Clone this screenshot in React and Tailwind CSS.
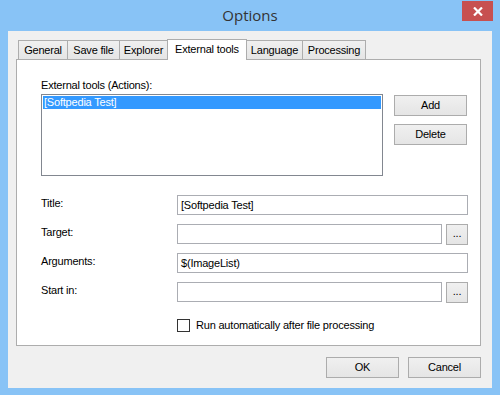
import React from "react";

const tabs = [
  { name: "General", w: "w-[50px]" },
  { name: "Save file", w: "w-[53px]" },
  { name: "Explorer", w: "w-[49px]" },
  { name: "External tools", w: "w-[80px]", active: true },
  { name: "Language", w: "w-[57px]" },
  { name: "Processing", w: "w-[64px]" },
];

const WinButton = ({ children, className = "" }) => (
  <button
    className={
      "h-[21px] border border-[#acacac] bg-gradient-to-b from-[#f0f0f0] to-[#e5e5e5] text-[11px] text-black leading-none " +
      className
    }
  >
    {children}
  </button>
);

const Field = ({ value, className = "" }) => (
  <div
    className={
      "h-[20px] border border-[#abadb3] bg-white pl-[3px] flex items-center text-[11px] text-black " +
      className
    }
  >
    {value}
  </div>
);

const Row = ({ label, children }) => (
  <div className="flex items-start h-[20px]">
    <div className="w-[136px] text-[11px] text-black">{label}</div>
    <div className="flex-1 flex gap-[4px]">{children}</div>
  </div>
);

export default function App() {
  return (
    <div className="w-[500px] h-[395px] bg-[#88c3f6] flex flex-col font-['Liberation_Sans',Arial,sans-serif] tracking-[-0.2px] overflow-hidden">
      {/* title bar */}
      <div className="relative h-[31px] flex items-center justify-center">
        <span className="font-['Open_Sans',sans-serif] text-[15px] text-[#333] tracking-normal">
          Options
        </span>
        <button className="absolute right-[7px] top-[1px] w-[31px] h-[20px] bg-[#c75050] flex items-center justify-center">
          <svg width="10" height="9" viewBox="0 0 10 9">
            <path d="M1 0.5 L9 8.5 M9 0.5 L1 8.5" stroke="white" strokeWidth="2.2" />
          </svg>
        </button>
      </div>

      {/* client */}
      <div className="mx-[8px] mb-[7px] flex-1 bg-[#f0f0f0] pt-[8px] pl-[8px] pr-[11px] pb-[10px] flex flex-col">
        <div>
          <div className="flex items-end h-[20px] pl-[2px]">
            {tabs.map((t) =>
              t.active ? (
                <div
                  key={t.name}
                  className={`${t.w} -ml-px h-[21px] relative z-10 -mb-px bg-white border border-b-0 border-[#adadad] flex items-center justify-center pb-[2px] text-[11px] text-black`}
                >
                  {t.name}
                </div>
              ) : (
                <div
                  key={t.name}
                  className={`${t.w} -ml-px first:ml-0 h-[19px] bg-gradient-to-b from-[#f0f0f0] to-[#e5e5e5] border border-b-0 border-[#adadad] flex items-center justify-center pt-px text-[11px] text-black`}
                >
                  {t.name}
                </div>
              )
            )}
          </div>

          {/* panel */}
          <div className="h-[287px] bg-white border border-[#adadad] pl-[24px] pr-[12px] pt-[19px] flex flex-col">
            <div className="text-[11px] text-black leading-[13px] h-[15px]">
              External tools (Actions):
            </div>
            <div className="flex gap-[11px]">
              <div className="w-[342px] h-[82px] border border-[#828790] p-px">
                <div className="h-[13px] bg-[#3399ff] text-white text-[11px] leading-[13px] pl-px">
                  [Softpedia Test]
                </div>
              </div>
              <div className="flex flex-col gap-[8px] pt-px">
                <WinButton className="w-[73px]">Add</WinButton>
                <WinButton className="w-[73px]">Delete</WinButton>
              </div>
            </div>

            <div className="mt-[19px] w-[427px] flex flex-col gap-[9px]">
              <Row label="Title:">
                <Field value="[Softpedia Test]" className="flex-1" />
              </Row>
              <Row label="Target:">
                <Field value="" className="flex-1" />
                <WinButton className="w-[22px] h-[20px] border-[#569de5] pb-[3px]">...</WinButton>
              </Row>
              <Row label="Arguments:">
                <Field value="$(ImageList)" className="flex-1" />
              </Row>
              <Row label="Start in:">
                <Field value="" className="flex-1" />
                <WinButton className="w-[22px] h-[20px] pb-[3px]">...</WinButton>
              </Row>
            </div>

            <div className="mt-[15px] ml-[136px] flex items-center gap-[6px]">
              <div className="w-[13px] h-[13px] border border-[#333] bg-white" />
              <span className="text-[11px] text-black">
                Run automatically after file processing
              </span>
            </div>
          </div>
        </div>

        <div className="mt-[11px] flex justify-end gap-[9px]">
          <WinButton className="w-[73px] h-[21px]">OK</WinButton>
          <WinButton className="w-[73px] h-[21px]">Cancel</WinButton>
        </div>
      </div>
    </div>
  );
}
